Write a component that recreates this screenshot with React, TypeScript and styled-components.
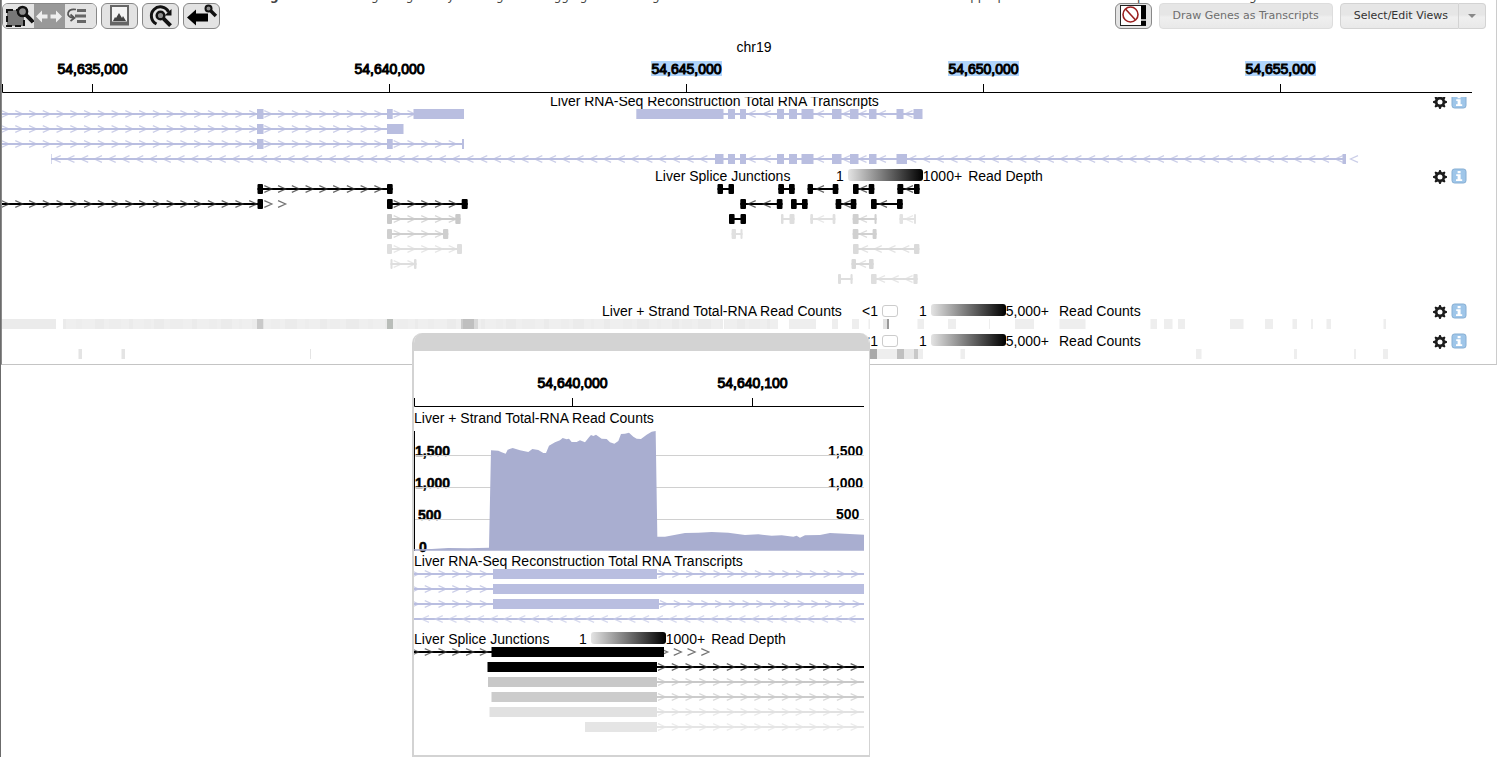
import React from "react";
import styled, { createGlobalStyle } from "styled-components";

const GlobalStyle = createGlobalStyle`
  * { box-sizing: border-box; }
  body {
    margin: 0;
    background: #fff;
    color: #000;
    font: 14px/16px "Liberation Sans", Arial, sans-serif;
  }
`;

const Page = styled.div`
  position: relative;
  min-height: 100vh;
  border-left: 1px solid #6b6b6b;
`;

const MainView = styled.main`
  height: 365px;
  overflow: hidden;
  border-left: 1px solid #8a8a8a;
  border-right: 1px solid #ccc;
  border-bottom: 1px solid #c4c4c4;
`;

const Hint = styled.p`
  margin: 0;
  height: 3px;
  overflow: hidden;
  padding-left: 238px;
  font: 12px/14px "DejaVu Sans", Verdana, sans-serif;
  color: #444;
  white-space: nowrap;
`;

const HintText = styled.span`
  display: block;
  margin-top: -11px;
`;

const Toolbar = styled.div`
  display: flex;
  justify-content: space-between;
  align-items: center;
  padding-right: 10px;
`;

const ToolGroup = styled.div`
  display: flex;
  align-items: center;
  gap: 4px;
`;

const Joined = styled.div`
  display: flex;
  height: 26px;
  overflow: hidden;
  border: 1px solid #888;
  border-radius: 6px;
`;

const JoinedButton = styled.button<{ $on?: boolean }>`
  width: 31px;
  padding: 0;
  border: 0;
  line-height: 0;
  background: ${(p) => (p.$on ? "#999" : "#e3e3e3")};
`;

const IconButton = styled.button`
  width: 37px;
  height: 26px;
  padding: 0;
  border: 1px solid #888;
  border-radius: 6px;
  background: #e3e3e3;
  line-height: 0;
`;

const TextButton = styled.button`
  height: 26px;
  padding: 0 13px;
  border: 1px solid #d3d3d3;
  border-radius: 4px;
  background: linear-gradient(#e6e6e6 0, #e6e6e6 45%, #efefef 55%, #e9e9e9);
  font: 11px/24px "DejaVu Sans", Verdana, sans-serif;
  color: #333;
  white-space: nowrap;
  &:disabled { color: #6e6e6e; border-color: #ddd; }
`;

const Split = styled.div`
  display: flex;
  ${TextButton}:first-child { border-radius: 4px 0 0 4px; padding: 0 10px 0 13px; }
  ${TextButton}:last-child {
    display: flex;
    align-items: center;
    border-left: 0;
    border-radius: 0 4px 4px 0;
    padding: 0 8px;
  }
`;

const RightTools = styled.div`
  display: flex;
  gap: 7px;
`;

const Viewport = styled.div`
  padding-right: 24px;
  overflow: hidden;
`;

const Canvas = styled.svg`
  display: block;
  width: 100%;
  overflow: hidden;
`;

const Tracks = styled.div`
  height: 267px;
  overflow: hidden;
`;

const Scrolled = styled.div`
  margin-top: -4px;
`;

const Header = styled.header<{ $shift?: number }>`
  display: flex;
  height: 16px;
  align-items: center;
  padding-left: ${(p) => (p.$shift === undefined ? "0" : `calc(50% - ${p.$shift}px)`)};
  padding-right: 5px;
  white-space: nowrap;
`;

const Title = styled.h2<{ $width: number }>`
  margin: 0;
  flex: 0 0 ${(p) => p.$width}px;
  font: inherit;
`;

const Swatch = styled.span`
  flex: none;
  width: 16px;
  height: 12px;
  margin: 0 21px 0 4px;
  border: 1px solid #ccc;
  border-radius: 3px;
`;

const Ramp = styled.span`
  flex: none;
  width: 75px;
  height: 12px;
  margin: 0 0 2px 4px;
  border-radius: 3px;
  background: linear-gradient(90deg, #e4e4e4, #000);
`;

const Unit = styled.span<{ $gap: number }>`
  margin-left: ${(p) => p.$gap}px;
`;

const Actions = styled.span`
  display: flex;
  gap: 3px;
  margin-left: auto;
`;

const PlainButton = styled.button`
  padding: 0;
  border: 0;
  background: none;
  line-height: 0;
`;

const Popup = styled.section`
  position: absolute;
  left: 411px;
  top: 333px;
  width: 458px;
  overflow: hidden;
  border: 2px solid #d3d3d3;
  border-top: 0;
  border-right-width: 1px;
  border-radius: 10px 10px 0 0;
  background: #fff;
`;

const PopupBar = styled.div`
  height: 18px;
  background: #d3d3d3;
`;

const PopupBody = styled.div`
  padding-right: 5px;
`;

const STEP = 13.76;
const LILAC = "#b9bee0";
const ARROW_LILAC = "#b9bee0";

type Dir = 1 | -1;
const tip = (cx: number, cy: number, d: Dir) =>
  `M${cx - 4 * d} ${cy - 3.4}L${cx + 3.6 * d} ${cy}L${cx - 4 * d} ${cy + 3.4}`;

function Arrows({ at, count = 1, y, dir, color }: { at: number; count?: number; y: number; dir: Dir; color: string }) {
  const d = Array.from({ length: count }, (_, i) => tip(at + i * STEP, y, dir)).join("");
  return <path d={d} fill="none" stroke={color} strokeWidth={1.2} strokeOpacity={0.75} />;
}

interface Feature {
  y: number;
  line: [number, number];
  blocks: [number, number][];
  arrows: [number, number][];
  dir: Dir;
  color: string;
  arrowColor?: string;
  round?: boolean;
}

function Features({ items, top }: { items: Feature[]; top: number }) {
  return (
    <>
      {items.map((f, i) => {
        const y = f.y - top;
        return (
          <g key={i} fill={f.color}>
            <rect x={f.line[0]} y={y - 1} width={f.line[1] - f.line[0]} height={2} />
            {f.arrows.map(([at, n]) => (
              <Arrows key={at} at={at} count={n} y={y} dir={f.dir} color={f.arrowColor ?? f.color} />
            ))}
            {f.blocks.map(([a, b]) => (
              <rect key={a} x={a} y={y - 5} width={b - a} height={10} rx={f.round ? 1 : 0} />
            ))}
          </g>
        );
      })}
    </>
  );
}

const EXONS: [number, number][] = [
  [728, 735], [740, 746], [777, 784], [789, 797], [801.5, 813.5],
  [832, 841.5], [850, 858.5], [869, 876.5],
];
const INNER_ARROWS: [number, number][] = [[751.7, 1], [766.7, 1], [820, 1], [846, 1], [862.5, 1], [882, 1]];
const lilac = { color: LILAC, arrowColor: ARROW_LILAC };

const transcripts: Feature[] = [
  { y: 114, line: [2, 414], blocks: [[257, 263.5], [387, 392.7], [413.5, 464]], arrows: [[5.5, 19], [268.3, 9], [397.7, 2]], dir: 1, ...lilac },
  { y: 129, line: [2, 388], blocks: [[257, 263.5], [387, 403.5]], arrows: [[5.5, 19], [268.3, 9]], dir: 1, ...lilac },
  { y: 144, line: [2, 464], blocks: [[257, 263.5], [387, 392.7], [462, 464]], arrows: [[5.5, 19], [268.3, 9], [397.7, 5]], dir: 1, ...lilac },
  { y: 114, line: [723, 914], blocks: [[636.3, 723.5], ...EXONS, [896.5, 903.5], [913.5, 922.5]], arrows: [...INNER_ARROWS, [908.5, 1]], dir: -1, ...lilac },
  { y: 159, line: [51, 1346], blocks: [[51, 51.6], [715, 723.5], ...EXONS, [896.5, 907], [1342.5, 1346]], arrows: [[56.7, 48], ...INNER_ARROWS, [912.3, 32], [1354, 1]], dir: -1, ...lilac },
];

const BLACK = "#000";
const junction = (
  y: number, a: [number, number], b: [number, number], color: string,
  arrows: [number, number][] = [], dir: Dir = -1,
): Feature => ({
  y, line: [a[0], b[1]], blocks: [a, b], color, dir, arrows,
  arrowColor: color === BLACK ? "#333" : color, round: true,
});

const junctions: Feature[] = [
  junction(189, [257.5, 263], [387, 392.7], BLACK, [[268.3, 9]], 1),
  junction(204, [-10, -5], [257.5, 263], BLACK, [[5.5, 19]], 1),
  junction(204, [387, 392.7], [461.7, 467.7], BLACK, [[397.7, 5]], 1),
  junction(219, [387, 392], [455.3, 460.6], "#c9c9c9", [[397.7, 5]], 1),
  junction(234, [387, 392], [443, 448.3], "#cfcfcf", [[397.7, 4]], 1),
  junction(249, [387, 392], [457, 462], "#dedede", [[397.7, 5]], 1),
  junction(264, [390.5, 392.5], [414, 416.5], "#dedede", [[397.7, 2]], 1),
  junction(189, [717.5, 723], [728.5, 734], BLACK),
  junction(189, [778.3, 784], [789, 794.7], BLACK),
  junction(189, [807.6, 813], [832.7, 838.3], BLACK, [[820, 1]]),
  junction(189, [853, 858.6], [868.7, 874.3], BLACK, [[863, 1]]),
  junction(189, [897.4, 903.3], [914, 919.6], BLACK, [[909, 1]]),
  junction(204, [740.3, 746], [776.8, 782.5], BLACK, [[751.7, 1], [766.7, 1]]),
  junction(204, [791, 796.7], [802, 807.6], BLACK),
  junction(204, [835.7, 841.3], [850.7, 856.3], BLACK, [[846.5, 1]]),
  junction(204, [871, 876.7], [897, 902.7], BLACK, [[883, 1]]),
  junction(219, [729, 734.6], [740.5, 746], BLACK),
  junction(219, [781, 783.5], [789.5, 794.5], "#dedede"),
  junction(219, [810.3, 813], [832.6, 835.4], "#e0e0e0", [[820, 1]]),
  junction(219, [852.7, 858.6], [874.5, 876.6], "#d0d0d0", [[863, 1]]),
  junction(219, [899.5, 903], [914, 916], "#e2e2e2", [[909, 1]]),
  junction(234, [731.6, 736], [740.5, 742.5], "#e0e0e0"),
  junction(234, [852.7, 858.4], [872.6, 876.6], "#d0d0d0", [[863, 1]]),
  junction(249, [853, 858.6], [914, 919.4], "#dadada", [[864, 4]]),
  junction(264, [851.5, 856], [869, 873.6], "#d8d8d8", [[862, 1]]),
  junction(279, [838, 841], [850.5, 852.6], "#dedede"),
  junction(279, [871, 876.6], [913.4, 917.6], "#dedede", [[881, 3]]),
];

type Cell = [number, number, string];
const noise: Cell[] = [];
for (let x = 63, i = 0; x < 778; i++) {
  const w = 3 + ((i * 7) % 11);
  const end = Math.min(778, x + w);
  noise.push([x, end, ["#ebebeb", "#efefef", "#eaeaea", "#ededed", "#e8e8e8", "#efefef", "#ececec"][(i * 5 + (i >> 2)) % 7]]);
  x = end;
}

const L = "#eeeeee";
const plusCells: Cell[] = [
  [2, 56, "#ebebeb"], ...noise,
  [257, 263.3, "#c9c9c9"], [387, 393, "#b9bdb9"], [461, 463, "#ccc"], [463, 474, "#bfbfbf"], [474, 478, "#d8d8d8"],
  [723, 724, "#fff"],
  [789, 816, L], [832, 838, L], [852, 859, L], [868.5, 870, L], [883, 887, "#e2e2e2"], [887, 889, "#999"],
  [917.5, 924, L], [948, 956, L], [989, 990, L], [1015, 1034, L], [1059.5, 1085.5, L],
  [1150.5, 1157, L], [1164, 1172.5, L], [1178, 1185, L], [1230, 1243.5, L], [1265, 1273, L],
  [1292.5, 1297, L], [1311, 1313, L], [1326.5, 1331, L], [1383.5, 1386, L],
];
const minusCells: Cell[] = [
  [78.5, 82, "#e4e4e4"], [121.5, 125, "#e4e4e4"], [310, 311, "#e4e4e4"],
  [869, 877, "#a9a9a9"], [877, 897, L], [897, 904, "#c0c0c0"], [904, 914, "#e8e8e8"], [914, 918, "#c8c8c8"], [918, 923, L],
  [960.5, 965, L], [1196, 1201.5, L], [1294, 1297, L], [1354, 1356, L], [1383, 1388, L],
];

function Cells({ cells }: { cells: Cell[] }) {
  return <>{cells.map(([a, b, c], i) => <rect key={i} x={a} y={0} width={b - a} height={10} fill={c} />)}</>;
}

interface Tick { x: number; label: string; selected?: boolean }

function Axis({ ticks, start, end, base }: { ticks: Tick[]; start: number; end: number; base: number }) {
  return (
    <g fontSize={14} textAnchor="middle">
      {ticks.map((t) => (
        <g key={t.x}>
          {t.selected && <rect x={t.x - 35} y={base - 31} width={71} height={15} fill="#b0d4fb" />}
          <text x={t.x + 0.5} y={base - 18} stroke="#000" strokeWidth={1}>{t.label}</text>
        </g>
      ))}
      <path
        d={`M${start + 0.5} ${base - 8}V${base + 0.5}H${end}` + ticks.map((t) => `M${t.x + 0.5} ${base - 8}v8`).join("")}
        fill="none" stroke="#000"
      />
    </g>
  );
}

const mainTicks: Tick[] = [
  { x: 92, label: "54,635,000" },
  { x: 389, label: "54,640,000" },
  { x: 686, label: "54,645,000", selected: true },
  { x: 983, label: "54,650,000", selected: true },
  { x: 1280, label: "54,655,000", selected: true },
];

function GearIcon() {
  return (
    <svg width="16" height="16" viewBox="0 0 16 16">
      <g fill="#1c1c1c">
        <circle cx="8" cy="9" r="5" />
        {[0, 45, 90, 135].map((a) => (
          <path key={a} d="M6.300 4.500L7.300 2h1.400l1 2.500v9L8.700 16H7.300l-1-2.500z" transform={`rotate(${a} 8 9)`} />
        ))}
      </g>
      <circle cx="8" cy="9" r="2.5" fill="#fff" />
    </svg>
  );
}

function InfoIcon() {
  return (
    <svg width="16" height="16" viewBox="0 0 16 16">
      <rect x="1" y="1" width="14" height="14" rx="2.5" fill="#9fc6e9" stroke="#86aed3" />
      <path d="M6.600 3h3v2.200h-3zM5.200 6.200h4.400v5h1.600v1.700H5v-1.700h1.600V7.900H5.200z" fill="#fff" />
    </svg>
  );
}

function TrackActions({ name }: { name: string }) {
  return (
    <Actions>
      <PlainButton aria-label={`${name} settings`}><GearIcon /></PlainButton>
      <PlainButton aria-label={`${name} information`}><InfoIcon /></PlainButton>
    </Actions>
  );
}

function DepthLegend() {
  return (
    <>
      <span>1</span><Ramp /><span>1000+</span><Unit $gap={6}>Read Depth</Unit>
    </>
  );
}

function CountHeader({ name }: { name: string }) {
  return (
    <Header $shift={135}>
      <Title $width={260}>{name}</Title>
      <span>&lt;1</span><Swatch /><span>1</span><Ramp /><span>5,000+</span><Unit $gap={10}>Read Counts</Unit>
      <TrackActions name={name} />
    </Header>
  );
}

function Lens({ x, y, r, s = 3, len = 8 }: { x: number; y: number; r: number; s?: number; len?: number }) {
  const k = r * 0.8;
  return (
    <g stroke="#111">
      <path d={`M${x + k} ${y + k}l${len} ${len}`} strokeWidth={s + 1} />
      <circle cx={x} cy={y} r={r} fill="#8d8d8d" strokeWidth={s - 0.5} />
    </g>
  );
}

function ToolbarRow() {
  return (
    <Toolbar>
      <ToolGroup>
        <Joined>
          <JoinedButton aria-label="Zoom to selection">
            <svg width="31" height="24" viewBox="0 0 31 24">
              <rect x="4" y="6" width="17" height="16" fill="#777" stroke="#111" strokeWidth="2" strokeDasharray="6 3" />
              <Lens x={19.5} y={7.5} r={4.6} len={7} />
            </svg>
          </JoinedButton>
          <JoinedButton $on aria-label="Pan">
            <svg width="31" height="24" viewBox="0 0 31 24">
              <path d="M2 12.500l6-6v4h5.500v4H8v4zM28 12.500l-6-6v4h-5.500v4H22v4z" fill="#eee" />
            </svg>
          </JoinedButton>
          <JoinedButton aria-label="Reorder tracks">
            <svg width="31" height="24" viewBox="0 0 31 24">
              <path d="M12 6.500h9M10 12h11M12 17.500h9" stroke="#666" strokeWidth="3" />
              <path d="M11 5.500C2 4 0 13 8 14M5.500 10.500l4 3.500-4 3" fill="none" stroke="#555" strokeWidth="1.700" />
            </svg>
          </JoinedButton>
        </Joined>
        <IconButton aria-label="Export image">
          <svg width="35" height="24" viewBox="0 0 35 24">
            <rect x="9" y="2" width="17" height="18" fill="#f4f4f4" stroke="#666" strokeWidth="2" />
            <path d="M11 17l2-4 1 1 3-5 3 5 1-2 3 5z" fill="#444" />
            <path d="M8 19.500h19" stroke="#666" strokeWidth="4" />
          </svg>
        </IconButton>
        <IconButton aria-label="Reset zoom">
          <svg width="35" height="24" viewBox="0 0 35 24">
            <path d="M13.500 20A9 9 0 1 1 25.500 8" fill="none" stroke="#111" strokeWidth="3" />
            <path d="M28.500 5v6.500h-7z" fill="#111" />
            <Lens x={17.5} y={11.5} r={3.8} len={7} />
          </svg>
        </IconButton>
        <IconButton aria-label="Previous view">
          <svg width="35" height="24" viewBox="0 0 35 24">
            <path d="M3 13.500l9-8v4h12v8H12v4z" fill="#000" />
            <Lens x={24.5} y={4.5} r={3} s={2.5} len={5} />
          </svg>
        </IconButton>
      </ToolGroup>
      <RightTools>
        <IconButton aria-label="Clear highlights">
          <svg width="35" height="24" viewBox="0 0 35 24">
            <rect x="4.500" y="1.500" width="25" height="20" fill="#fff" stroke="#222" />
            <rect x="25" y="1.500" width="5" height="20" fill="#000" />
            <rect x="25" y="15" width="5" height="2" fill="#aaa" />
            <circle cx="14.500" cy="10.500" r="7.500" fill="none" stroke="#9a2020" strokeWidth="1.600" />
            <path d="M9.500 5l10 11" stroke="#9a2020" strokeWidth="1.600" />
          </svg>
        </IconButton>
        <TextButton disabled>Draw Genes as Transcripts</TextButton>
        <Split>
          <TextButton>Select/Edit Views</TextButton>
          <TextButton aria-label="More views">
            <svg width="10" height="6" viewBox="0 0 10 6"><path d="M1 1h8L5 5z" fill="#888" /></svg>
          </TextButton>
        </Split>
      </RightTools>
    </Toolbar>
  );
}

const COVERAGE =
  "M27 662V658L80 657L130 654L190 655L252 653L258 361L280 362L290 367L302 371L308 359L323 354L345 361L370 366L382 357L400 360L415 369L423 369L432 347L450 337L465 331L473 324L485 328L492 326L500 336L515 336L525 331L540 337L552 322L558 315L565 318L573 314L590 326L605 327L615 337L628 341L640 333L648 312L660 311L672 308L685 320L695 326L708 327L725 314L740 305L752 303L757 620L780 620L840 609L880 608L920 606L970 608L1020 615L1060 613L1100 617L1130 616L1165 620L1175 617L1185 623L1200 616L1245 615L1275 609L1320 611L1377 614V662Z";

const popupTranscripts: Feature[] = [
  { y: 574, line: [414, 864], blocks: [[493, 657]], arrows: [[415, 6], [662.5, 15]], dir: 1, ...lilac },
  { y: 589, line: [414, 864], blocks: [[493, 864]], arrows: [[415, 6]], dir: 1, ...lilac },
  { y: 604, line: [414, 864], blocks: [[493, 659]], arrows: [[415, 6], [664, 15]], dir: 1, ...lilac },
  { y: 619, line: [414, 864], blocks: [], arrows: [[425, 32]], dir: -1, color: LILAC, arrowColor: "#c8cce8" },
];

const popupJunctions: Feature[] = [
  { y: 652, line: [414, 492], blocks: [[491.5, 664]], arrows: [[415, 6], [664, 4]], dir: 1, color: BLACK, arrowColor: "#444" },
  ...([
    [667, 487.5, BLACK, "#333"], [682, 488, "#c8c8c8", "#c8c8c8"], [697, 491.5, "#cccccc", "#cccccc"],
    [712, 489.5, "#e1e1e1", "#e1e1e1"], [727, 585, "#e5e5e5", "#e5e5e5"],
  ] as [number, number, string, string][]).map(([y, x, color, arrowColor]): Feature => ({
    y, line: [656, 864], blocks: [[x, 657]], arrows: [[662, 15]], dir: 1, color, arrowColor,
  })),
];

function DetailPopup() {
  return (
    <Popup aria-label="Region detail">
      <PopupBar />
      <PopupBody>
        <Canvas height={59}>
          <g transform="translate(-414 0)">
            <Axis start={414} end={864} base={55} ticks={[{ x: 572, label: "54,640,000" }, { x: 752, label: "54,640,100" }]} />
          </g>
        </Canvas>
        <Header><Title $width={260}>Liver + Strand Total-RNA Read Counts</Title></Header>
        <Canvas height={127}>
          <g fontSize={14} fontWeight={700}>
            <g stroke="#000" strokeWidth={0.5}>
              <text x={1} y={30}>1,500</text>
              <text x={1} y={62}>1,000</text>
              <text x={4} y={94}>500</text>
              <text x={5} y={126}>0</text>
            </g>
            <text x={414} y={30}>1,500</text>
            <text x={414} y={62}>1,000</text>
            <text x={422} y={93}>500</text>
          </g>
          <path d="M0 29.500H450M0 61.500H450M0 93.500H450" stroke="#d0d0d0" />
          <path d="M0.500 5V125" stroke="#000" />
          <path d={COVERAGE} transform="translate(-9 -96) scale(.33333)" fill="#a9aed0" />
        </Canvas>
        <Header><Title $width={340}>Liver RNA-Seq Reconstruction Total RNA Transcripts</Title></Header>
        <Canvas height={62}>
          <g transform="translate(-414 0)"><Features items={popupTranscripts} top={569} /></g>
        </Canvas>
        <Header><Title $width={165}>Liver Splice Junctions</Title><DepthLegend /></Header>
        <Canvas height={108}>
          <g transform="translate(-414 0)"><Features items={popupJunctions} top={647} /></g>
        </Canvas>
      </PopupBody>
    </Popup>
  );
}

export default function App() {
  return (
    <Page>
      <GlobalStyle />
      <MainView>
        <Hint>
          <HintText><b>Navigate:</b> Move along the gene by clicking and dragging in the image. To learn more about one track item click on the appropriate icon at the far top of the whole image</HintText>
        </Hint>
        <ToolbarRow />
        <Viewport>
          <Canvas height={68}>
            <g transform="translate(-2 0)">
              <text x={754} y={23} fontSize={14} textAnchor="middle">chr19</text>
              <Axis start={2} end={1472} base={63} ticks={mainTicks} />
            </g>
          </Canvas>
          <Tracks>
            <Scrolled>
              <Header $shift={187}>
                <Title $width={340}>Liver RNA-Seq Reconstruction Total RNA Transcripts</Title>
                <TrackActions name="Transcripts" />
              </Header>
              <Canvas height={59}>
                <g transform="translate(-2 0)"><Features items={transcripts} top={109} /></g>
              </Canvas>
              <Header $shift={82}>
                <Title $width={181}>Liver Splice Junctions</Title>
                <DepthLegend />
                <TrackActions name="Splice junctions" />
              </Header>
              <Canvas height={119}>
                <g transform="translate(-2 0)">
                  <Features items={junctions} top={184} />
                  <Arrows at={268.3} count={2} y={20} dir={1} color="#444" />
                </g>
              </Canvas>
              <CountHeader name="Liver + Strand Total-RNA Read Counts" />
              <Canvas height={14}>
                <g transform="translate(-2 0)"><Cells cells={plusCells} /></g>
              </Canvas>
              <CountHeader name="Liver - Strand Total-RNA Read Counts" />
              <Canvas height={15}>
                <g transform="translate(-2 0)"><Cells cells={minusCells} /></g>
              </Canvas>
            </Scrolled>
          </Tracks>
        </Viewport>
      </MainView>
      <DetailPopup />
    </Page>
  );
}
